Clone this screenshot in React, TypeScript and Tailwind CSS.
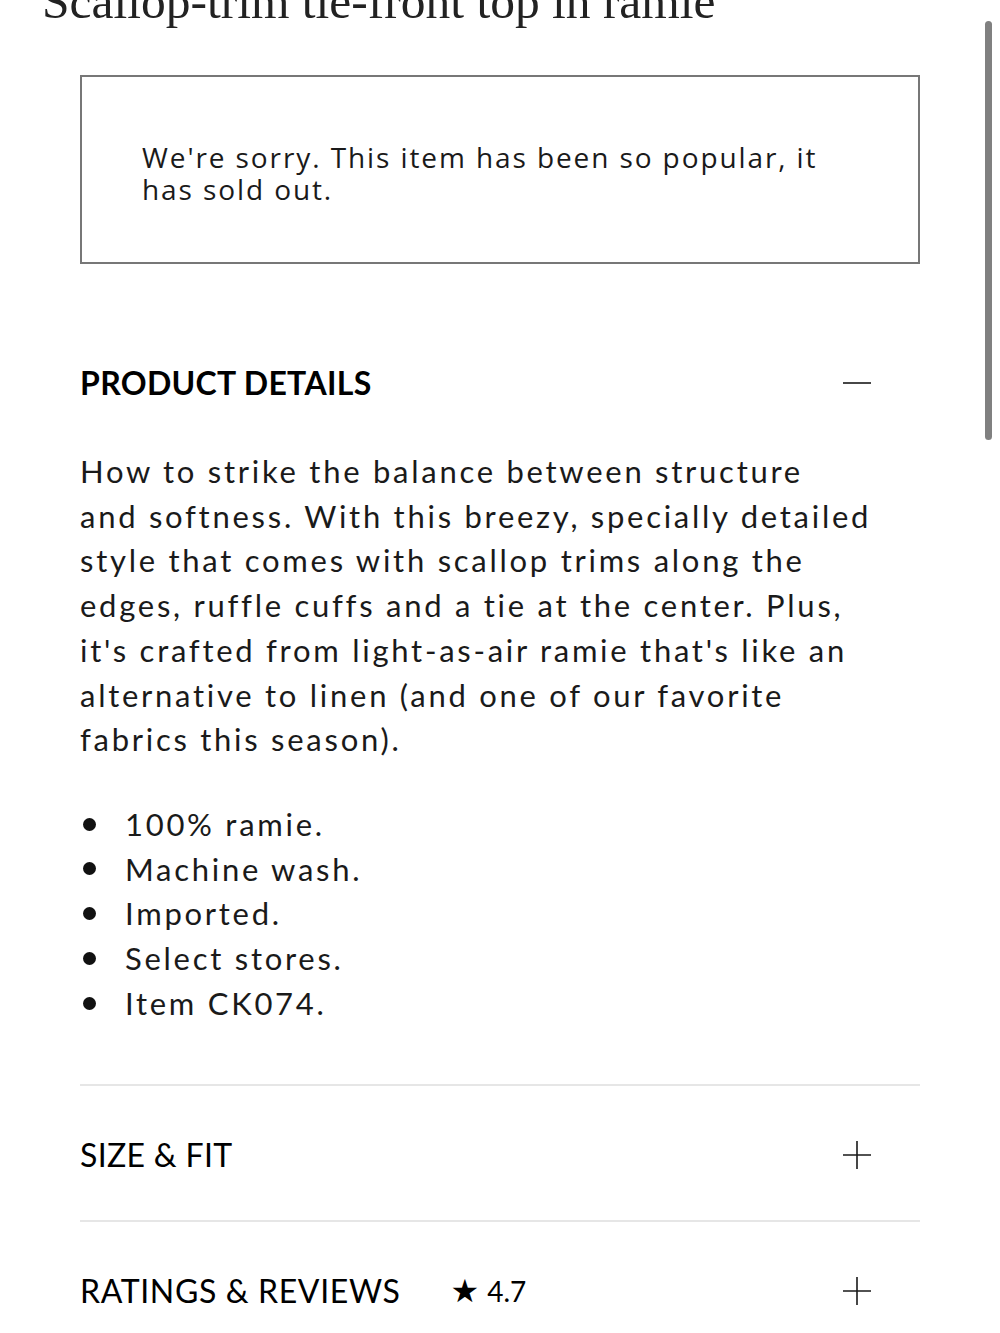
import React from 'react';

const details = [
  '100% ramie.',
  'Machine wash.',
  'Imported.',
  'Select stores.',
  'Item CK074.',
];

const PlusIcon = () => (
  <svg width="30" height="30" viewBox="0 0 30 30" className="shrink-0">
    <path d="M1 15h28M15 1v28" stroke="#1a1a1a" strokeWidth="1.6" fill="none" />
  </svg>
);

const MinusIcon = () => (
  <svg width="30" height="30" viewBox="0 0 30 30" className="shrink-0">
    <path d="M1 15h28" stroke="#1a1a1a" strokeWidth="1.6" fill="none" />
  </svg>
);

export default function App() {
  return (
    <div className="relative h-[1333px] overflow-hidden bg-white text-[#1a1a1a]">
      {/* overlay scrollbar */}
      <div className="absolute right-[8px] top-[21px] h-[419px] w-[7px] rounded-full bg-[#808080]" />

      <div className="px-[80px]">
        {/* Title, scrolled partly off screen */}
        <h1 className="-mt-[25px] ml-[-38px] font-['Liberation_Serif',serif] text-[49.5px] leading-[53px] font-normal text-[#222] whitespace-nowrap">
          Scallop-trim tie-front top in ramie
        </h1>

        {/* Sold out notice */}
        <div className="mt-[47px] border-2 border-[#777] px-[60px] pt-[64px] pb-[57px]">
          <p className="font-['Open_Sans',sans-serif] text-[28px] leading-[32px] tracking-[0.068em] text-[#1a1a1a]">
            We're sorry. This item has been so popular, it has sold out.
          </p>
        </div>

        {/* Product details */}
        <div className="mt-[99px] flex items-center justify-between pr-[48px]">
          <h2 className="font-['Lato',sans-serif] text-[32px] leading-[40px] font-bold tracking-[0.01em] text-black">
            PRODUCT DETAILS
          </h2>
          <MinusIcon />
        </div>

        <p className="mt-[46px] pr-[46px] font-['Lato',sans-serif] text-[31px] leading-[44.7px] tracking-[0.088em] text-[#1a1a1a]">
          How to strike the balance between structure
          <br />
          and softness. With this breezy, specially detailed style that comes with scallop trims along the
          edges, ruffle cuffs and a tie at the center. Plus, it's crafted from light-as-air ramie that's like
          an alternative to linen (and one of our favorite fabrics this season).
        </p>

        <ul className="mt-[40px] font-['Lato',sans-serif] text-[31px] leading-[44.7px] tracking-[0.088em] text-[#1a1a1a]">
          {details.map((d) => (
            <li key={d} className="flex items-center">
              <span className="ml-[3px] mr-[29px] h-[13px] w-[13px] rounded-full bg-[#111]" />
              {d}
            </li>
          ))}
        </ul>

        {/* Collapsed sections */}
        <div className="mt-[59px] border-t-2 border-[#e6e6e6]">
          <div className="flex items-center justify-between pt-[49px] pb-[45px] pr-[48px]">
            <span className="font-['Lato',sans-serif] text-[32px] leading-[40px] tracking-[0.01em] text-black">
              SIZE &amp; FIT
            </span>
            <PlusIcon />
          </div>
        </div>
        <div className="border-t-2 border-[#e6e6e6]">
          <div className="flex items-center justify-between pt-[49px] pb-[45px] pr-[48px]">
            <div className="flex items-center">
              <span className="font-['Lato',sans-serif] text-[32px] leading-[40px] tracking-[0.02em] text-black">
                RATINGS &amp; REVIEWS
              </span>
              <span className="ml-[50px] font-['DejaVu_Sans',sans-serif] text-[32px] leading-[40px] text-black">★</span>
              <span className="ml-[8px] font-['Lato',sans-serif] text-[28px] leading-[40px] text-black">4.7</span>
            </div>
            <PlusIcon />
          </div>
        </div>
      </div>
    </div>
  );
}
